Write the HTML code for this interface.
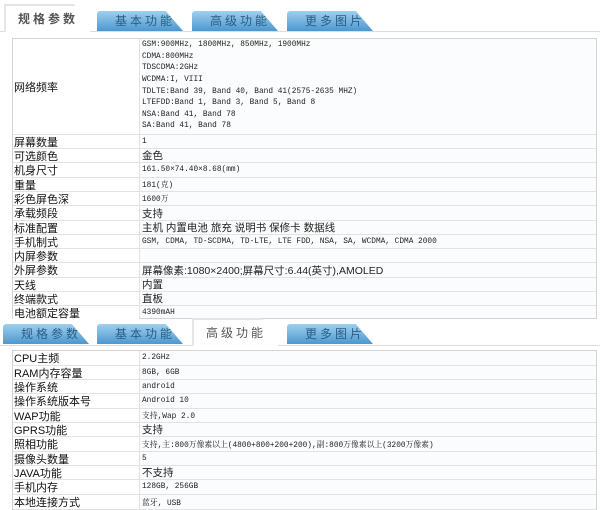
<!DOCTYPE html>
<html><head><meta charset="utf-8"><style>
*{margin:0;padding:0;box-sizing:border-box}
body{width:600px;height:508px;background:#fff;position:relative;overflow:hidden;font-family:"Liberation Sans","Noto Sans CJK SC",sans-serif}
.bar{position:absolute;left:0;width:600px;border-bottom:1px solid #ddd}
.tab{position:absolute;height:20px;width:86px;font-size:12px;letter-spacing:3px;padding-left:18px;line-height:20px;color:#2a5d83;
background:linear-gradient(#9fd0ee,#4c98cf);clip-path:polygon(0 0,80% 0,100% 100%,0 100%);border-radius:3px 0 0 0}
.act{position:absolute;height:28px;width:86px;font-size:12px;letter-spacing:3px;padding-left:12px;line-height:26px;color:#555;font-weight:bold;background:#fff;
border-top:2px solid #e4e4e4;clip-path:polygon(0 0,80% 0,100% 40%,100% 100%,0 100%);border-left:2px solid #e6e6e6}
.tbl{position:absolute;left:12px;width:585px;border:1px solid #d4d4d4;background:#fbfcfd}
.r{position:absolute;left:0;width:583px;border-bottom:1px solid #e2e2e2;display:flex}
.l{width:127px;border-right:1px solid #e2e2e2;font-size:11px;padding-left:1px;display:flex;align-items:center;color:#111;background:#fff}
.v{flex:1;font-family:"Liberation Mono","Noto Serif CJK SC",monospace;font-size:7.8px;padding-left:2px;display:flex;align-items:center;color:#222;white-space:nowrap}
.v.c{font-family:"Liberation Sans","Noto Sans CJK SC",sans-serif;font-size:10.5px}
.net{flex-direction:column;align-items:flex-start;justify-content:center;line-height:11.6px}
</style></head><body>
<div class="bar" style="top:0;height:32px"></div>
<div class="act" style="left:4px;top:4px">规格参数</div>
<div class="tab" style="left:97px;top:11px">基本功能</div>
<div class="tab" style="left:192px;top:11px">高级功能</div>
<div class="tab" style="left:287px;top:11px">更多图片</div>

<div class="tbl" style="top:38px;height:281px">
<div class="r" style="top:0;height:96px"><div class="l">网络频率</div><div class="v net">
<div>GSM:900MHz, 1800MHz, 850MHz, 1900MHz</div><div>CDMA:800MHz</div><div>TDSCDMA:2GHz</div><div>WCDMA:I, VIII</div><div>TDLTE:Band 39, Band 40, Band 41(2575-2635 MHZ)</div><div>LTEFDD:Band 1, Band 3, Band 5, Band 8</div><div>NSA:Band 41, Band 78</div><div>SA:Band 41, Band 78</div></div></div>
<div class="r" style="top:96px;height:14px"><div class="l">屏幕数量</div><div class="v">1</div></div>
<div class="r" style="top:110px;height:14px"><div class="l">可选颜色</div><div class="v c">金色</div></div>
<div class="r" style="top:124px;height:15px"><div class="l">机身尺寸</div><div class="v">161.50×74.40×8.68(mm)</div></div>
<div class="r" style="top:139px;height:14px"><div class="l">重量</div><div class="v">181(克)</div></div>
<div class="r" style="top:153px;height:14px"><div class="l">彩色屏色深</div><div class="v">1600万</div></div>
<div class="r" style="top:167px;height:15px"><div class="l">承载频段</div><div class="v c">支持</div></div>
<div class="r" style="top:182px;height:14px"><div class="l">标准配置</div><div class="v c">主机 内置电池 旅充 说明书 保修卡 数据线</div></div>
<div class="r" style="top:196px;height:14px"><div class="l">手机制式</div><div class="v">GSM, CDMA, TD-SCDMA, TD-LTE, LTE FDD, NSA, SA, WCDMA, CDMA 2000</div></div>
<div class="r" style="top:210px;height:14px"><div class="l">内屏参数</div><div class="v"></div></div>
<div class="r" style="top:224px;height:15px"><div class="l">外屏参数</div><div class="v c">屏幕像素:1080×2400;屏幕尺寸:6.44(英寸),AMOLED</div></div>
<div class="r" style="top:239px;height:14px"><div class="l">天线</div><div class="v c">内置</div></div>
<div class="r" style="top:253px;height:14px"><div class="l">终端款式</div><div class="v c">直板</div></div>
<div class="r" style="top:267px;height:13px;border:0"><div class="l">电池额定容量</div><div class="v">4390mAH</div></div>
</div>

<div class="bar" style="top:318px;height:28px;border-bottom:1px solid #ddd"></div>
<div class="tab" style="left:3px;top:324px">规格参数</div>
<div class="tab" style="left:97px;top:324px">基本功能</div>
<div class="act" style="left:192px;top:318px;font-weight:normal">高级功能</div>
<div class="tab" style="left:287px;top:324px">更多图片</div>

<div class="tbl" style="top:350px;height:160px">
<div class="r" style="top:0;height:15px"><div class="l">CPU主频</div><div class="v">2.2GHz</div></div>
<div class="r" style="top:15px;height:14px"><div class="l">RAM内存容量</div><div class="v">8GB, 6GB</div></div>
<div class="r" style="top:29px;height:14px"><div class="l">操作系统</div><div class="v">android</div></div>
<div class="r" style="top:43px;height:15px"><div class="l">操作系统版本号</div><div class="v">Android 10</div></div>
<div class="r" style="top:58px;height:14px"><div class="l">WAP功能</div><div class="v">支持,Wap 2.0</div></div>
<div class="r" style="top:72px;height:14px"><div class="l">GPRS功能</div><div class="v c">支持</div></div>
<div class="r" style="top:86px;height:15px"><div class="l">照相功能</div><div class="v">支持,主:800万像素以上(4800+800+200+200),副:800万像素以上(3200万像素)</div></div>
<div class="r" style="top:101px;height:14px"><div class="l">摄像头数量</div><div class="v">5</div></div>
<div class="r" style="top:115px;height:14px"><div class="l">JAVA功能</div><div class="v c">不支持</div></div>
<div class="r" style="top:129px;height:15px"><div class="l">手机内存</div><div class="v">128GB, 256GB</div></div>
<div class="r" style="top:144px;height:15px"><div class="l">本地连接方式</div><div class="v">蓝牙, USB</div></div>
</div>
</body></html>
